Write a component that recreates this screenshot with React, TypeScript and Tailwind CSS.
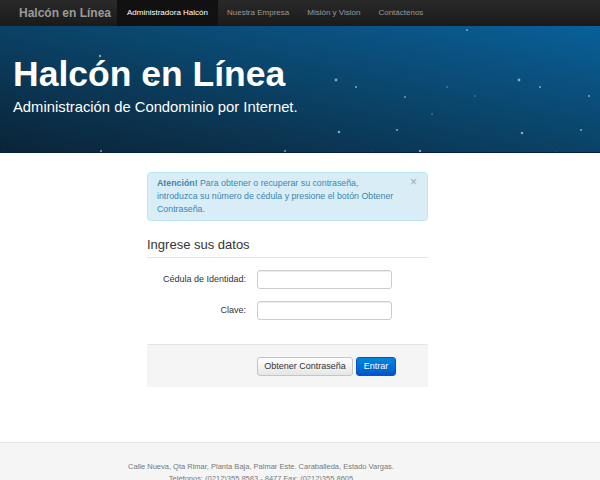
const stars = [
  [100, 30, 1.2], [152, 54, 1], [229, 43, 1.3], [101, 125, 1], [285, 125, 1], [5, 127, 1.2], [189, 127, 1],
  [336, 54, 1.4], [356, 61, 1], [405, 71, 0.9], [447, 61, 0.7], [475, 70, 0.7], [432, 88, 0.7],
  [339, 106, 1.3], [397, 104, 1], [368, 131, 0.8], [420, 125, 1.2], [519, 54, 1.4], [540, 61, 1],
  [589, 70, 1], [522, 107, 1.3], [581, 104, 1], [372, 127, 1.2], [556, 127, 1.2], [467, 4, 1],
];

const menu = ["Nuestra Empresa", "Misión y Vision", "Contáctenos"];

const App = () => {
  return (
    <div className="min-h-[480px] bg-white font-['Liberation_Sans',Arial,sans-serif]">
      <nav className="h-[26px] flex bg-gradient-to-b from-[#2a2a2a] to-[#1a1a1a]">
        <span className="pl-[19px] pr-[6px] flex items-center text-[12px] font-bold text-[#9a9a9a]">
          Halcón en Línea
        </span>
        <span className="px-[10px] flex items-center bg-[#111111] text-[8px] text-white">
          Administradora Halcón
        </span>
        {menu.map((item) => (
          <span key={item} className="px-[9px] flex items-center text-[8px] text-[#999999]">
            {item}
          </span>
        ))}
      </nav>

      <header className="relative h-[127px] overflow-hidden bg-gradient-to-tr from-[#0a2438] via-[#0a4266] to-[#09609a] border-b border-[#06223a]">
        <svg className="absolute inset-0" width="600" height="127">
          {stars.map(([x, y, r], i) => (
            <circle key={i} cx={x} cy={y} r={r} fill="#a9c0d6" opacity="0.8" />
          ))}
        </svg>
        <div className="relative pl-[13px] pt-[28px]">
          <h1 className="text-[35.5px] leading-[40px] font-bold text-white">Halcón en Línea</h1>
          <p className="text-[14.8px] leading-[20px] text-white mt-[3px]">
            Administración de Condominio por Internet.
          </p>
        </div>
      </header>

      <main className="ml-[147px] w-[281px] pt-[19px]">
        <div className="relative rounded-[4px] border border-[#bce8f1] bg-[#d9edf7] pl-[9px] pr-[32px] py-[4px] text-[8.8px] leading-[13px] text-[#3a87ad]">
          <b>Atención!</b> Para obtener o recuperar su contraseña, introduzca su número de cédula y presione el botón Obtener Contraseña.
          <span className="absolute right-[10px] top-[3px] text-[12px] text-[#9aa9b5]">×</span>
        </div>

        <h2 className="mt-[14px] text-[13px] leading-[20px] text-[#333333] pb-[2px] border-b border-[#e5e5e5]">
          Ingrese sus datos
        </h2>

        <div className="pt-[12px] flex flex-col gap-[12px]">
          <div className="flex items-center">
            <label className="w-[99px] text-right text-[9px] text-[#333333]">Cédula de Identidad:</label>
            <input className="ml-[11px] w-[135px] h-[19px] rounded-[3px] border border-[#cccccc] bg-white shadow-[inset_0_1px_1px_rgba(0,0,0,0.075)]" />
          </div>
          <div className="flex items-center">
            <label className="w-[99px] text-right text-[9px] text-[#333333]">Clave:</label>
            <input type="password" className="ml-[11px] w-[135px] h-[19px] rounded-[3px] border border-[#cccccc] bg-white shadow-[inset_0_1px_1px_rgba(0,0,0,0.075)]" />
          </div>
        </div>

        <div className="mt-[24px] h-[43px] bg-[#f5f5f5] border-t border-[#e5e5e5] pl-[110px] pt-[12px] flex gap-[3px] items-start">
          <button className="h-[19px] w-[96px] rounded-[3px] border border-[#c5c5c5] bg-gradient-to-b from-white to-[#e6e6e6] text-[9px] text-[#333333]">
            Obtener Contraseña
          </button>
          <button className="h-[19px] w-[40px] rounded-[3px] border border-[#0055cc] bg-gradient-to-b from-[#0088dd] to-[#0055cc] text-[9px] text-white">
            Entrar
          </button>
        </div>
      </main>

      <footer className="mt-[55px] border-t border-[#e5e5e5] bg-[#f5f5f5] pt-[18px] pb-[10px] pr-[78px] text-center text-[7.5px] leading-[12px] text-[#777777]">
        <p>Calle Nueva, Qta Rimar, Planta Baja, Palmar Este. Caraballeda, Estado Vargas.</p>
        <p>Teléfonos: (0212)355.8583 - 8477 Fax: (0212)355.8605</p>
      </footer>
    </div>
  );
};

export default App;
